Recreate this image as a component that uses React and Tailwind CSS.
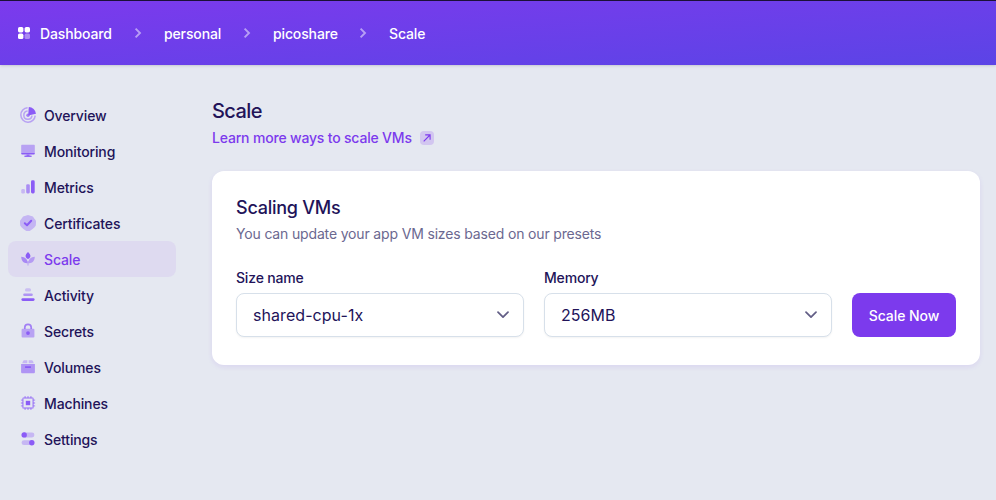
const P = '#8b5cf6'

const icons = {
  Overview: (
    <>
      <g fill="none" stroke={P} strokeOpacity=".5" strokeWidth="1.5">
        <path d="M7.6.8A7.2 7.2 0 1 0 15.2 8.6" />
        <path d="M7.6 4A4.1 4.1 0 1 0 12 8.6" />
      </g>
      <circle cx="8" cy="8.2" r="1.7" fill={P} fillOpacity=".75" />
      <path d="M8.8 0A7.8 7.8 0 0 1 16 6.8L8.2 8.4z" fill={P} />
    </>
  ),
  Monitoring: (
    <>
      <path d="M2 1.7h12a.8.8 0 0 1 .8.8V10H1.2V2.5a.8.8 0 0 1 .8-.8z" fill={P} fillOpacity=".5" />
      <path d="M1.2 10h13.6v.5a.9.9 0 0 1-.9.9H2.1a.9.9 0 0 1-.9-.9z" fill={P} />
      <path d="M6.5 11.4h3v1h1.5a.8.8 0 0 1 0 1.6H5a.8.8 0 0 1 0-1.6h1.5z" fill={P} fillOpacity=".9" />
    </>
  ),
  Metrics: (
    <g fill={P}>
      <rect x="1.3" y="10" width="3.6" height="4.4" rx="1.2" fillOpacity=".35" />
      <rect x="6.2" y="5.2" width="3.6" height="9.2" rx="1.3" fillOpacity=".65" />
      <rect x="11" y="1.3" width="3.7" height="13.1" rx="1.4" />
    </g>
  ),
  Certificates: (
    <>
      <path d="M8 0l2.4.8 2.5.8 1.5 2.1L16 5.8V8l-.2 2.5-1.5 2.1-2.1 1.6L9.7 16H6.3l-2.5-1.8-2.1-1.6-1.5-2.1L0 8V5.8l1.5-2.1 1.6-2.1L5.6.8z" fill={P} fillOpacity=".36" />
      <path d="M4.8 8.2l2.2 2 4.2-4.4" fill="none" stroke={P} strokeWidth="2" strokeLinecap="round" strokeLinejoin="round" />
    </>
  ),
  Scale: (
    <g fill={P}>
      <path d="M8 .9c1.4 1.1 2.4 2.6 2.4 4 0 1.3-.9 2.3-2.4 3.1-1.5-.8-2.4-1.8-2.4-3.1 0-1.4 1-2.9 2.4-4z" />
      <path d="M1.2 5.8c3.8.2 6.2 2 6.4 6.4-3.9.3-6.2-2-6.4-6.4z" fillOpacity=".65" />
      <path d="M14.8 5.8c-3.8.2-6.2 2-6.4 6.4 3.9.3 6.2-2 6.4-6.4z" fillOpacity=".5" />
      <path d="M7.5 10h1v4.6h-1z" fillOpacity=".45" />
    </g>
  ),
  Activity: (
    <g fill={P}>
      <rect x="5" y="1.3" width="6" height="3.2" rx="1.5" fillOpacity=".3" />
      <rect x="3.2" y="6.4" width="9.6" height="2.6" rx="1.3" fillOpacity=".6" />
      <rect x="1.4" y="11.2" width="13.2" height="2.7" rx="1.3" />
    </g>
  ),
  Secrets: (
    <>
      <path d="M4.8 6V4.6a3.2 3.2 0 0 1 6.4 0V6" fill="none" stroke={P} strokeOpacity=".75" strokeWidth="1.7" />
      <rect x="1.6" y="5.8" width="12.8" height="8.8" rx="1" fill={P} fillOpacity=".5" />
      <circle cx="8" cy="10.1" r="1.9" fill={P} />
    </>
  ),
  Volumes: (
    <g fill={P}>
      <path d="M4.3 1.2h3v3H2.2l.9-2.2c.2-.5.6-.8 1.2-.8z M8.7 1.2h3c.6 0 1 .3 1.2.8l.9 2.2H8.7z" fillOpacity=".35" />
      <path d="M1.1 5h13.8v8.2a1 1 0 0 1-1 1H2.1a1 1 0 0 1-1-1z" fillOpacity=".6" />
      <rect x="5" y="7.2" width="6" height="1.8" rx=".4" />
    </g>
  ),
  Machines: (
    <>
      <path d="M5.1.9v2M8 .9v2M10.9.9v2M5.1 13.1v2M8 13.1v2M10.9 13.1v2M.9 5.1h2M.9 8h2M.9 10.9h2M13.1 5.1h2M13.1 8h2M13.1 10.9h2" stroke={P} strokeOpacity=".55" strokeWidth="1.3" />
      <rect x="2.9" y="2.9" width="10.2" height="10.2" rx=".8" fill="none" stroke={P} strokeOpacity=".6" strokeWidth="1.5" />
      <rect x="5.8" y="5.8" width="4.4" height="4.4" fill={P} />
    </>
  ),
  Settings: (
    <g fill={P}>
      <rect x="1.6" y="1.5" width="12.8" height="4.9" rx="2.4" fillOpacity=".35" />
      <circle cx="4.2" cy="3.9" r="2.7" />
      <rect x="1.6" y="9.2" width="12.8" height="4.9" rx="2.4" fillOpacity=".35" />
      <circle cx="11.8" cy="11.7" r="2.7" />
    </g>
  ),
}

function NavItem({ name, active }) {
  return (
    <a className={`flex h-9 items-center gap-2 rounded-lg px-3 ${active ? 'bg-[#dedaf0] text-[#7c3aed]' : ''}`}>
      <svg viewBox="0 0 16 16" className="size-4 shrink-0">{icons[name]}</svg>
      <span className="pt-0.5 text-sm leading-5 font-medium tracking-[-0.13px]">{name}</span>
    </a>
  )
}

function Crumb({ children, className }) {
  return (
    <>
      <svg viewBox="0 0 8 12" className="mb-0.5 h-3 w-2 shrink-0">
        <path d="M1.6 1.6 6 6l-4.4 4.4" fill="none" stroke="#fff" strokeOpacity=".5" strokeWidth="1.9" />
      </svg>
      <span className={`whitespace-nowrap pt-px ${className}`}>{children}</span>
    </>
  )
}

function Select({ label, value }) {
  return (
    <div className="w-72">
      <div className="text-sm leading-5 font-medium tracking-[-0.18px]">{label}</div>
      <div className="mt-[5px] flex h-11 items-center justify-between rounded-lg border border-[#d7e0ea] bg-white pr-3.5 pl-4 shadow-xs">
        <span className="text-base tracking-[0.06px]">{value}</span>
        <svg viewBox="0 0 12 8" className="h-2 w-3">
          <path d="M1 1.2 6 6.2l5-5" fill="none" stroke="#625e86" strokeWidth="1.7" strokeLinecap="round" strokeLinejoin="round" />
        </svg>
      </div>
    </div>
  )
}

export default function App() {
  return (
    <div className="h-[500px] w-[996px] overflow-hidden bg-[#e5e8f1] font-['Inter',sans-serif] text-[#221359] antialiased">
      <header className="flex h-[65px] items-center border-t border-[#1b1038] bg-[linear-gradient(176deg,#7c3aed,#5b44e6)] pl-[18px] pt-px text-sm leading-5 font-medium tracking-[-0.13px] text-white shadow-sm">
        <svg viewBox="0 0 12 12" className="mr-[10px] mb-0.5 size-3 shrink-0" fill="#fff">
          <rect width="5.4" height="5.4" rx="1.6" />
          <rect x="6.6" width="5.4" height="5.4" rx="1.6" />
          <rect y="6.6" width="5.4" height="5.4" rx="1.6" />
          <rect x="6.6" y="6.6" width="5.4" height="5.4" rx="1.6" fillOpacity=".4" />
        </svg>
        <span className="w-[94px] pt-px">Dashboard</span>
        <Crumb className="ml-[22px] w-[79px]">personal</Crumb>
        <Crumb className="ml-[22px] w-[86px]">picoshare</Crumb>
        <Crumb className="ml-[22px]">Scale</Crumb>
      </header>
      <div className="flex">
        <nav className="ml-2 w-[168px] pt-8">
          {Object.keys(icons).map((name) => (
            <NavItem key={name} name={name} active={name === 'Scale'} />
          ))}
        </nav>
        <main className="ml-9 w-[768px] pt-8">
          <h1 className="text-xl leading-7 font-medium tracking-[-0.6px]">Scale</h1>
          <a className="mt-[3px] flex items-center gap-2 text-sm leading-5 font-medium tracking-[-0.18px] text-[#7c3aed]">
            Learn more ways to scale VMs
            <span className="flex size-3.5 items-center justify-center rounded bg-[#d2c6f0]">
              <svg viewBox="0 0 8 8" className="size-2">
                <path d="M.7 7.3 7 1M2.2.9h4.9v4.9" fill="none" stroke="#7c3aed" strokeWidth="1.1" />
              </svg>
            </span>
          </a>
          <section className="mt-[23px] h-[194px] rounded-xl bg-white px-6 pt-6 shadow-[0_2px_5px_#7c3aed1a]">
            <h2 className="text-lg leading-[26px] font-medium tracking-[-0.25px]">Scaling VMs</h2>
            <p className="mt-[3px] text-sm leading-5 tracking-[-0.16px] text-[#6b6890]">You can update your app VM sizes based on our presets</p>
            <div className="mt-6 flex items-end gap-5">
              <Select label="Size name" value="shared-cpu-1x" />
              <Select label="Memory" value="256MB" />
              <button className="h-11 w-[104px] rounded-lg bg-[#7c3aed] pt-0.5 text-sm font-medium tracking-[-0.05px] text-white">Scale Now</button>
            </div>
          </section>
        </main>
      </div>
    </div>
  )
}
